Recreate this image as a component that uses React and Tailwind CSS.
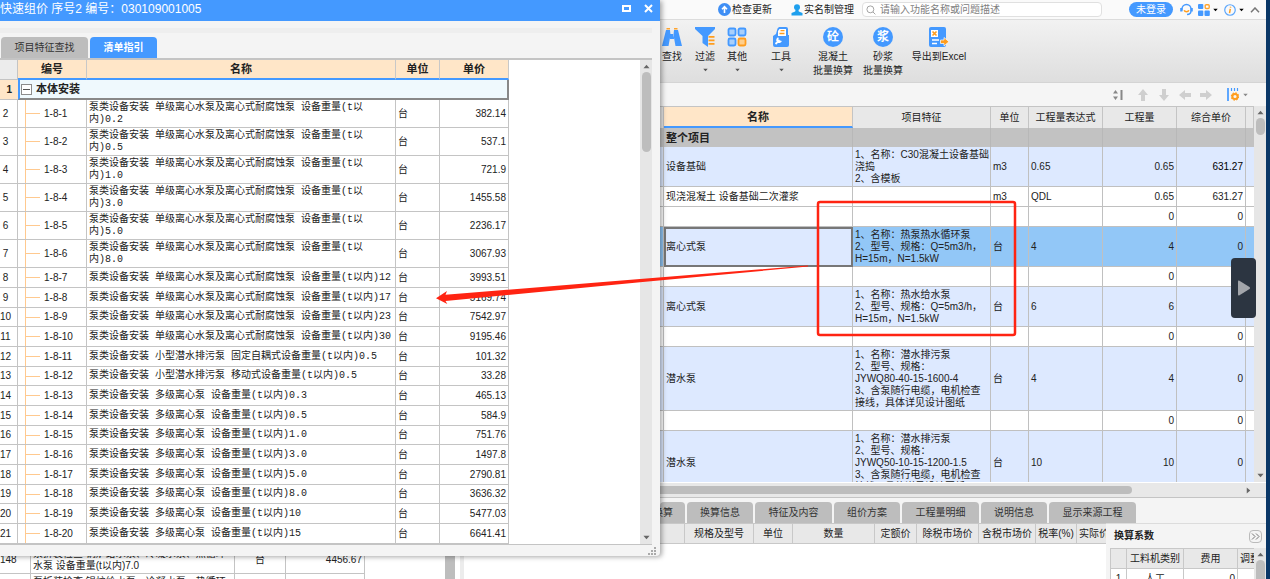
import React from 'react';

const pump = '泵类设备安装 单级离心水泵及离心式耐腐蚀泵 设备重量(t以';
const multi = '泵类设备安装 多级离心泵 设备重量(t以内)';

const guideRows = [
  { name: pump + '\n内)0.2', price: '382.14', tall: true },
  { name: pump + '\n内)0.5', price: '537.1', tall: true },
  { name: pump + '\n内)1.0', price: '721.9', tall: true },
  { name: pump + '\n内)3.0', price: '1455.58', tall: true },
  { name: pump + '\n内)5.0', price: '2236.17', tall: true },
  { name: pump + '\n内)8.0', price: '3067.93', tall: true },
  { name: pump + '内)12', price: '3993.51' },
  { name: pump + '内)17', price: '5169.74' },
  { name: pump + '内)23', price: '7542.97' },
  { name: pump + '内)30', price: '9195.46' },
  { name: '泵类设备安装 小型潜水排污泵 固定自耦式设备重量(t以内)0.5', price: '101.32' },
  { name: '泵类设备安装 小型潜水排污泵 移动式设备重量(t以内)0.5', price: '33.28' },
  { name: multi + '0.3', price: '465.13' },
  { name: multi + '0.5', price: '584.9' },
  { name: multi + '1.0', price: '751.76' },
  { name: multi + '3.0', price: '1497.8' },
  { name: multi + '5.0', price: '2790.81' },
  { name: multi + '8.0', price: '3636.32' },
  { name: multi + '10', price: '5477.03' },
  { name: multi + '15', price: '6641.41' },
];

const billRows = [
  { name: '设备基础', feature: '1、名称：C30混凝土设备基础\n浇捣\n2、含模板', unit: 'm3', expr: '0.65', qty: '0.65', price: '631.27', height: 'h-10', bg: 'bg-[#dde9ff]', bold: true },
  { name: '现浇混凝土 设备基础二次灌浆', unit: 'm3', expr: 'QDL', qty: '0.65', price: '631.27', height: 'h-5', bg: 'bg-white' },
  { qty: '0', price: '0', height: 'h-5', bg: 'bg-white' },
  { name: '离心式泵', feature: '1、名称：热泵热水循环泵\n2、型号、规格：Q=5m3/h，\nH=15m，N=1.5kW', unit: '台', expr: '4', qty: '4', price: '0', height: 'h-10', bg: 'bg-[#92c7f7]', selected: true },
  { qty: '0', price: '0', height: 'h-5', bg: 'bg-white' },
  { name: '离心式泵', feature: '1、名称：热水给水泵\n2、型号、规格：Q=5m3/h，\nH=15m，N=1.5kW', unit: '台', expr: '6', qty: '6', price: '0', height: 'h-10', bg: 'bg-[#dde9ff]' },
  { qty: '0', price: '0', height: 'h-5', bg: 'bg-white' },
  { name: '潜水泵', feature: '1、名称：潜水排污泵\n2、型号、规格：\nJYWQ80-40-15-1600-4\n3、含泵随行电缆，电机检查\n接线，具体详见设计图纸', unit: '台', expr: '4', qty: '4', price: '0', height: 'h-16', bg: 'bg-[#dde9ff]' },
  { qty: '0', price: '0', height: 'h-5', bg: 'bg-white' },
  { name: '潜水泵', feature: '1、名称：潜水排污泵\n2、型号、规格：\nJYWQ50-10-15-1200-1.5\n3、含泵随行电缆，电机检查\n接线，具体详见设计图纸', unit: '台', expr: '10', qty: '10', price: '0', height: 'h-16', bg: 'bg-[#dde9ff]' },
];

const Caret = ({ className = 'w-[7px] h-[5px] text-[#666]' }) => (
  <svg viewBox="0 0 8 5" className={`shrink-0 ${className}`} fill="currentColor">
    <path d="M0.5 0.5h7L4 4.5z" />
  </svg>
);

const VScroll = ({ thumb }) => (
  <div className="w-3 shrink-0 bg-[#e6e6e6] flex flex-col items-center py-1">
    <Caret className="w-[7px] h-[5px] text-[#666] rotate-180" />
    <div className={`w-[9px] mt-[3px] rounded-full bg-[#bdbdbd] ${thumb}`}></div>
    <div className="flex-1"></div>
    <Caret />
  </div>
);

const QuickPriceDialog = () => {
  const cell = 'border-b border-r border-[#c4c4c4] p-0';
  const head = 'h-5 border-b-2 border-r border-r-[#c8c8c8] border-b-[#4499ff] bg-[#ffe6c8] p-0 text-[11px] font-bold';
  return (
    <div className="relative z-10 bg-[#f4f4f4] rounded-br shadow-[2px_1px_5px_rgba(0,0,0,0.35)]">
      <div className="h-[21px] bg-[#4499ff] text-white flex items-center pr-[7px]">
        <h1 className="flex-1 pb-[3px] text-[12px] leading-4 whitespace-pre">快速组价 序号2 编号：030109001005</h1>
        <button aria-label="最大化" className="mr-[13px] mb-[5px] w-[9px] h-[7px] border-2 border-white"></button>
        <button aria-label="关闭" className="mb-[5px]">
          <svg viewBox="0 0 9 9" className="w-[9px] h-[9px]" stroke="white" strokeWidth="2"><path d="M1 1l7 7M8 1l-7 7" /></svg>
        </button>
      </div>
      <div className="mt-[7px] h-[5px] mr-2 bg-[#eeeeee]"></div>
      <div className="mt-1 ml-px flex gap-[2px]">
        <button className="w-[87px] h-[21px] rounded-t-sm bg-[#bdbdbd] text-[#333]">项目特征查找</button>
        <button className="w-[67px] h-[21px] rounded-t-sm bg-[#4499ff] text-white font-bold">清单指引</button>
      </div>
      <div className="mr-2 flex bg-white border-t-2 border-b border-[#c4c4c4]">
        <div className="flex-1">
          <table className="table-fixed w-[509px] border-separate border-spacing-0 leading-3">
            <colgroup>
              <col className="w-[18px]" />
              <col className="w-[69px]" />
              <col className="w-[309px]" />
              <col className="w-[44px]" />
              <col className="w-[69px]" />
            </colgroup>
            <thead>
              <tr>
                <th className="h-5 bg-[#ececec] border-b border-r border-[#c4c4c4] p-0"></th>
                <th className={head}>编号</th>
                <th className={head}>名称</th>
                <th className={head}>单位</th>
                <th className={head}>单价</th>
              </tr>
            </thead>
            <tbody>
              <tr>
                <td className="h-5 bg-[#ffe6c8] border-b border-[#c4c4c4] pr-[6px] text-right font-bold">1</td>
                <td colSpan={4} className="bg-[#eff9fd] border-l-2 border-l-[#4499ff] border-b-2 border-r-2 border-[#888] p-0">
                  <div className="flex items-center gap-1 pl-px text-[11px] font-bold">
                    <button aria-label="折叠" className="w-[11px] h-[11px] border border-[#8c8c8c] bg-white flex items-center justify-center">
                      <span className="w-[7px] h-px bg-[#555]"></span>
                    </button>
                    本体安装
                  </div>
                </td>
              </tr>
              {guideRows.map((row, i) => {
                const height = row.tall ? 'h-7' : i % 3 === 2 ? 'h-[19px]' : 'h-5';
                return (
                  <tr key={i}>
                    <td className={`${cell} ${height} text-center pr-[6px]`}>{i + 2}</td>
                    <td className={`${cell} ${height}`}>
                      <div className="ml-[7px] h-full border-l border-[#ffc98f] flex items-center">
                        <span className="w-[14px] h-px bg-[#ffc98f]"></span>
                        <span className="ml-1">1-8-{i + 1}</span>
                      </div>
                    </td>
                    <td className={`${cell} pl-[2px] whitespace-pre font-['Liberation_Mono','Noto_Sans_CJK_SC',monospace]`}>{row.name}</td>
                    <td className={`${cell} pl-[2px]`}>台</td>
                    <td className={`${cell} pr-[2px] text-right`}>{row.price}</td>
                  </tr>
                );
              })}
            </tbody>
          </table>
        </div>
        <VScroll thumb="h-20" />
      </div>
      <div className="h-[11px] flex justify-end items-center pr-1">
        <svg viewBox="0 0 8 8" className="w-2 h-2" fill="#aaa">
          <path d="M6 0h2v2H6zM3 3h2v2H3zM6 3h2v2H6zM0 6h2v2H0zM3 6h2v2H3zM6 6h2v2H6z" />
        </svg>
      </div>
    </div>
  );
};

// quota list that sits behind the dialog
const QuotaList = () => {
  const cell = 'h-7 border-b border-r border-[#c4c4c4] p-0';
  return (
    <div className="-mt-[10px] flex-1 min-h-0 overflow-hidden flex bg-white leading-3">
      <div className="flex-1">
        <table className="table-fixed w-[365px] border-separate border-spacing-0">
          <colgroup>
            <col className="w-[31px]" />
            <col className="w-[204px]" />
            <col className="w-[51px]" />
            <col className="w-[79px]" />
          </colgroup>
          <tbody>
            <tr>
              <td className={cell}>148</td>
              <td className={`${cell} pl-[2px] whitespace-pre`}>{'泵拆装检查 锅炉给水泵、冷凝水泵、热循环\n水泵 设备重量(t以内)7.0'}</td>
              <td className={`${cell} text-center`}>台</td>
              <td className={`${cell} pr-[2px] text-right`}>4456.67</td>
            </tr>
            <tr>
              <td className={cell}></td>
              <td className={`${cell} pl-[2px] whitespace-pre`}>{'泵拆装检查 锅炉给水泵、冷凝水泵、热循环\n水泵 设备重量(t以内)10'}</td>
              <td className={cell}></td>
              <td className={cell}></td>
            </tr>
          </tbody>
        </table>
      </div>
      <div className="w-[10px] bg-[#bdbdbd]"></div>
      <div className="w-[9px] mr-[196px] border-r-4 border-[#ececec]"></div>
    </div>
  );
};

const TitleBar = () => (
  <header className="h-5 shrink-0 flex items-center bg-[#fafafa] border-b border-[#dcdcdc] pr-[6px]">
    <button className="ml-[58px] flex items-center gap-px">
      <svg viewBox="0 0 13 13" className="w-[13px] h-[13px]">
        <circle cx="6.5" cy="6.5" r="6.5" fill="#3f8ff5" />
        <path d="M6.5 10V4M4 6.2l2.5-2.5L9 6.2" stroke="white" strokeWidth="1.6" fill="none" />
      </svg>
      检查更新
    </button>
    <button className="ml-[19px] flex items-center gap-px">
      <svg viewBox="0 0 12 12" className="w-3 h-3" fill="#1fa0ee">
        <circle cx="6" cy="3.2" r="3" />
        <path d="M4.5 6h3l.3 1.5L11.5 9v2.5H.5V9l3.7-1.5z" />
      </svg>
      实名制管理
    </button>
    <label className="ml-2 w-60 h-[15px] flex items-center gap-1 pl-[3px] bg-white border border-[#e0e0e0] rounded-sm">
      <svg viewBox="0 0 11 11" className="w-[10px] h-[10px] shrink-0" stroke="#999" fill="none">
        <circle cx="4.8" cy="4.8" r="3.8" />
        <path d="M7.7 7.7l2.6 2.6" />
      </svg>
      <input aria-label="搜索" placeholder="请输入功能名称或问题描述" className="flex-1 min-w-0 h-3 outline-none placeholder:text-[#808080]" />
    </label>
    <div className="flex-1"></div>
    <button className="w-[44px] h-[15px] rounded-full bg-[#4499ff] text-white">未登录</button>
    <button aria-label="客服" className="ml-[7px]">
      <svg viewBox="0 0 13 13" className="w-[13px] h-[13px]" fill="none">
        <path d="M2 7.5V6a4.5 4.5 0 0 1 9 0v1.500c0 2.500-1.800 4-4 4" stroke="#4499ff" strokeWidth="1.4" />
        <path d="M1.300 5v3.400M11.700 5v3.400" stroke="#4499ff" strokeWidth="2.2" />
        <path d="M4.200 7.200c.8 2 3.800 2 4.600 0" stroke="#ff9d1e" strokeWidth="1.6" />
      </svg>
    </button>
    <button aria-label="应用" className="ml-[5px] flex items-center gap-[3px]">
      <svg viewBox="0 0 12 12" className="w-3 h-3" fill="#4499ff">
        <rect width="5.3" height="5" rx="1" />
        <rect y="6.5" width="5.3" height="5.5" rx="1" />
        <rect x="6.5" y="6.5" width="5.3" height="5.5" rx="1" />
        <rect x="7.2" y=".7" width="4" height="3.8" rx="1" fill="#fff" stroke="#ffa42e" strokeWidth="1.4" />
      </svg>
      <Caret className="text-black w-[5px] h-[4px]" />
    </button>
    <button aria-label="关于" className="ml-[6px] flex items-center gap-[3px]">
      <svg viewBox="0 0 13 13" className="w-3 h-3" fill="none">
        <circle cx="6.5" cy="6.5" r="5.7" stroke="#5aa5fb" strokeWidth="1.3" />
        <path d="M7.200 3l-.2 1M6.800 5.300L6 10" stroke="#ff9d1e" strokeWidth="1.6" />
      </svg>
      <Caret className="text-black w-[5px] h-[4px]" />
    </button>
    <button aria-label="收起" className="ml-[6px]">
      <svg viewBox="0 0 10 6" className="w-[10px] h-[6px]" stroke="#777" strokeWidth="1.5" fill="none"><path d="M1 5.300L5 1l4 4.300" /></svg>
    </button>
  </header>
);

const RoundIcon = ({ char }) => (
  <span className="w-5 h-5 rounded-full bg-[#4499ff] text-white text-[12px] leading-5 text-center font-bold">{char}</span>
);

const Tool = ({ icon, label, sub, drop, className }) => (
  <button className={`flex flex-col items-center whitespace-nowrap ${className}`}>
    <span className="h-5 flex items-center">{icon}</span>
    <span className="mt-[3px] leading-[14px]">{label}</span>
    {sub && <span className="leading-[14px]">{sub}</span>}
    {drop && <Caret className="mt-1 w-[5px] h-[4px] text-[#555]" />}
  </button>
);

const Toolbar = () => (
  <div className="h-[63px] shrink-0 flex items-start pt-[7px] bg-gradient-to-b from-[#f2f2f2] to-[#dedede] border-b border-[#d4d4d4]">
    <Tool className="w-6" label="查找" icon={
      <svg viewBox="0 0 20 20" className="w-5 h-5" fill="#4499ff">
        <path d="M4 3h4l.5 5L6.500 19H0zM16 3h-4l-.5 5 2 11H20zM8 7h4v5H8z" />
        <path d="M4.500 1h3.500v1.500H4.500zM12 1h3.500v1.500H12z" fill="#ffa42e" />
      </svg>
    } />
    <Tool className="ml-[5px] w-8" label="过滤" drop icon={
      <svg viewBox="0 0 20 20" className="w-5 h-5" fill="#4499ff">
        <path d="M0 0h20v2l-7 7v11l-5.500-4V9L0 2z" />
        <path d="M13.500 9h6v1.700h-6zM13.500 12.500h6v1.700h-6zM13.500 16h6v1.700h-6z" fill="#ff9d1e" />
      </svg>
    } />
    <Tool className="w-8" label="其他" drop icon={
      <svg viewBox="0 0 20 20" className="w-5 h-5" fill="#a8cffb" stroke="#4499ff" strokeWidth="1.800">
        <rect x="1.500" y="1.500" width="7" height="7" rx="1.500" />
        <rect x="11.500" y="1.500" width="7" height="7" rx="1.500" />
        <rect x="1.500" y="11.500" width="7" height="7" rx="1.500" />
        <rect x="11.500" y="11.500" width="7" height="7" rx="1.500" fill="#ffcf8d" stroke="#ff9d1e" />
      </svg>
    } />
    <Tool className="ml-3 w-8" label="工具" drop icon={
      <svg viewBox="0 0 20 20" className="w-5 h-5">
        <path d="M6.500 1.500L8 0h7a2 2 0 0 1 2 2v6h1v10a2 2 0 0 1-2 2H4a2 2 0 0 1-2-2V9l3-2z" fill="#4499ff" />
        <path d="M8.500 2H15v7H7V4z" fill="#fff" />
        <path d="M9.500 3.700h4M8.500 6.500h5" stroke="#ff9d1e" strokeWidth="1.300" />
        <path d="M4.500 17l4-4M7.500 11.200a2 2 0 1 0 2.500 2.500" stroke="#fff" strokeWidth="1.800" fill="none" />
      </svg>
    } />
    <Tool className="ml-4 w-10" label="混凝土" sub="批量换算" icon={<RoundIcon char="砼" />} />
    <Tool className="ml-[10px] w-10" label="砂浆" sub="批量换算" icon={<RoundIcon char="浆" />} />
    <Tool className="ml-2 w-14" label="导出到Excel" icon={
      <svg viewBox="0 0 20 20" className="w-5 h-5">
        <rect x="0" y="0" width="17" height="20" rx="2" fill="#4499ff" />
        <path d="M2 3h7v7H2z" fill="#fff" />
        <path d="M3.500 4.500l4 4M7.500 4.500l-4 4" stroke="#ff9d1e" strokeWidth="1.700" />
        <path d="M3 13h7M3 16.500h5" stroke="#fff" strokeWidth="1.300" />
        <path d="M11.500 13h3.500v-2.500l5 4.200-5 4.200v-2.400h-3.500z" fill="#ff9d1e" stroke="#fff" strokeWidth=".7" />
      </svg>
    } />
  </div>
);

const Arrow = ({ label, turn }) => (
  <button aria-label={label} className="w-[13px] flex justify-center">
    <svg viewBox="0 0 12 12" className={`w-3 h-3 ${turn}`} fill="#cfcfcf"><path d="M6 0l5 6H8v6H4V6H1z" /></svg>
  </button>
);

const SubBar = () => (
  <div className="h-[23px] shrink-0 flex items-center justify-end pr-[18px] bg-[#f5f5f5]">
    <button aria-label="行高">
      <svg viewBox="0 0 11 12" className="w-[11px] h-3" fill="#888"><path d="M0 4.500L2.500 1 5 4.500zM0 7.500L2.500 11 5 7.500zM7.500 1h2v10h-2z" /></svg>
    </button>
    <div className="ml-3 mr-[15px] flex gap-2">
      <Arrow label="上移" turn="rotate-0" />
      <Arrow label="下移" turn="rotate-180" />
      <Arrow label="左移" turn="-rotate-90" />
      <Arrow label="右移" turn="rotate-90" />
    </div>
    <button aria-label="列设置" className="flex items-center gap-1">
      <svg viewBox="0 0 12 13" className="w-3 h-[13px]">
        <path d="M1 0v13" stroke="#4499ff" strokeWidth="1.700" />
        <path d="M4.500 0v3M7.500 0v3M10.500 0v3" stroke="#4499ff" strokeWidth="1.200" />
        <circle cx="8" cy="8.500" r="2.600" fill="none" stroke="#ff9d1e" strokeWidth="2" />
        <circle cx="8" cy="8.500" r="3.600" fill="none" stroke="#ff9d1e" strokeWidth="1.200" strokeDasharray="1.600 1.200" />
      </svg>
      <Caret className="w-[5px] h-[4px] text-[#888]" />
    </button>
  </div>
);

const BillTable = () => {
  const cell = 'border-b border-r border-[#c0c0c0] p-0';
  const head = 'h-[22px] bg-[#e8e8e8] border-r border-t border-[#c4c4c4] p-0 font-normal';
  return (
    <div className="flex-1 min-h-0 flex flex-col">
      <div className="flex-1 min-h-0 flex">
        <div className="flex-1 min-w-0 overflow-hidden">
          <table className="table-fixed w-full border-separate border-spacing-0 leading-3">
            <colgroup>
              <col className="w-1" />
              <col />
              <col className="w-[138px]" />
              <col className="w-[38px]" />
              <col className="w-[74px]" />
              <col className="w-[74px]" />
              <col className="w-[69px]" />
              <col className="w-2" />
            </colgroup>
            <thead>
              <tr>
                <th className={head}></th>
                <th className="bg-[#ffe6c8] border-b-2 border-b-[#4499ff] border-t border-r border-[#c4c4c4] p-0 text-[11px] font-bold">名称</th>
                <th className={head}>项目特征</th>
                <th className={head}>单位</th>
                <th className={head}>工程量表达式</th>
                <th className={head}>工程量</th>
                <th className={head}>综合单价</th>
                <th className={head}></th>
              </tr>
            </thead>
            <tbody>
              <tr className="bg-[#c2c2c2]">
                <td className="h-[19px] border-r border-[#b8b8b8] p-0"></td>
                <td className="border-r border-[#b8b8b8] p-0 pl-[2px] text-[11px] font-bold">整个项目</td>
                <td className="border-r border-[#b8b8b8]"></td>
                <td className="border-r border-[#b8b8b8]"></td>
                <td className="border-r border-[#b8b8b8]"></td>
                <td className="border-r border-[#b8b8b8]"></td>
                <td className="border-r border-[#b8b8b8]"></td>
                <td></td>
              </tr>
              {billRows.map((row, i) => (
                <tr key={i} className={row.bg}>
                  <td className={`${cell} ${row.height}`}></td>
                  <td className={row.selected ? 'bg-[#dde9ff] border-2 border-[#777] p-0' : `${cell} pl-[2px]`}>{row.name}</td>
                  <td className={`${cell} pl-[2px] whitespace-pre`}>{row.feature}</td>
                  <td className={`${cell} pl-[2px]`}>{row.unit}</td>
                  <td className={`${cell} pl-[2px]`}>{row.expr}</td>
                  <td className={`${cell} pr-[2px] text-right`}>{row.qty}</td>
                  <td className={`${cell} pr-[2px] text-right ${row.bold ? 'text-black' : ''}`}>{row.price}</td>
                  <td className="border-b border-[#c0c0c0] p-0"></td>
                </tr>
              ))}
            </tbody>
          </table>
        </div>
        <VScroll thumb="h-[17px]" />
      </div>
      <div className="h-[14px] mt-px shrink-0 flex items-center bg-[#e8e8e8]">
        <div className="w-[472px] h-2 rounded-r-full bg-[#bdbdbd]"></div>
        <div className="flex-1"></div>
        <Caret className="mr-[14px] w-[7px] h-[5px] text-[#666] -rotate-90" />
      </div>
    </div>
  );
};

const BottomPanel = () => {
  const tab = 'h-[21px] rounded-t-sm bg-[#bdbdbd] text-[#333]';
  const th = 'h-[21px] bg-[#e8e8e8] border-r border-y border-[#c8c8c8] p-0 font-normal whitespace-nowrap';
  return (
    <div className="h-[82px] shrink-0 border-t border-[#c4c4c4] bg-[#f4f4f4] flex flex-col">
      <div className="mt-1 flex gap-[2px] overflow-hidden">
        <button className={`${tab} w-[25px] flex justify-end items-center pr-3 whitespace-nowrap`}>换算</button>
        <button className={`${tab} w-[66px]`}>换算信息</button>
        <button className={`${tab} w-[77px]`}>特征及内容</button>
        <button className={`${tab} w-[66px]`}>组价方案</button>
        <button className={`${tab} w-[77px]`}>工程量明细</button>
        <button className={`${tab} w-[66px]`}>说明信息</button>
        <button className={`${tab} w-[87px]`}>显示来源工程</button>
      </div>
      <div className="flex-1 min-h-0 flex">
        <div className="flex-1 min-w-0 bg-white overflow-hidden">
          <table className="table-fixed w-[460px] border-separate border-spacing-0 leading-3">
            <colgroup>
              <col className="w-[25px]" />
              <col className="w-[69px]" />
              <col className="w-[39px]" />
              <col className="w-[82px]" />
              <col className="w-[42px]" />
              <col className="w-[62px]" />
              <col className="w-[57px]" />
              <col className="w-[41px]" />
              <col className="w-[43px]" />
            </colgroup>
            <thead>
              <tr>
                <th className={th}></th>
                <th className={th}>规格及型号</th>
                <th className={th}>单位</th>
                <th className={th}>数量</th>
                <th className={th}>定额价</th>
                <th className={th}>除税市场价</th>
                <th className={th}>含税市场价</th>
                <th className={th}>税率(%)</th>
                <th className={`${th} text-left pl-[2px]`}>实际价</th>
              </tr>
            </thead>
          </table>
        </div>
        <div className="w-40 pl-1 overflow-hidden border-t border-[#dcdcdc] flex flex-col">
          <div className="h-[24px] shrink-0 flex items-center pl-1 pr-1">
            <h2 className="flex-1 font-bold">换算系数</h2>
            <button aria-label="展开" className="w-[13px] h-[13px] rounded-sm border border-[#bbb] flex items-center justify-center">
              <svg viewBox="0 0 9 7" className="w-[9px] h-[7px]" stroke="#777" fill="none"><path d="M1 .5l3 3-3 3M5 .5l3 3-3 3" /></svg>
            </button>
          </div>
          <div className="flex-1 min-h-0 flex">
            <div className="flex-1 overflow-hidden">
              <table className="table-fixed w-[162px] border-separate border-spacing-0 bg-white leading-3">
                <colgroup>
                  <col className="w-[17px]" />
                  <col className="w-[57px]" />
                  <col className="w-[54px]" />
                  <col className="w-[34px]" />
                </colgroup>
                <thead>
                  <tr>
                    <th className={`${th} border-l`}></th>
                    <th className={th}>工料机类别</th>
                    <th className={th}>费用</th>
                    <th className={`${th} text-left pl-[2px]`}>调整</th>
                  </tr>
                </thead>
                <tbody>
                  <tr>
                    <td className="h-5 border-x border-[#c8c8c8] p-0 text-center">1</td>
                    <td className="border-r border-[#c8c8c8] p-0 text-center">人工</td>
                    <td className="border-r border-[#c8c8c8] p-0 pr-[2px] text-right">0</td>
                    <td></td>
                  </tr>
                </tbody>
              </table>
            </div>
            <div className="w-3 bg-[#e6e6e6] flex flex-col items-center pt-1 overflow-hidden">
              <Caret className="w-[7px] h-[5px] text-[#666] rotate-180" />
              <div className="w-[9px] h-10 mt-[3px] shrink-0 rounded-t-full bg-[#bdbdbd]"></div>
            </div>
          </div>
        </div>
      </div>
    </div>
  );
};

// red box and arrow drawn on top of both windows
const Annotation = () => (
  <svg className="absolute inset-0 z-20 w-full h-full pointer-events-none">
    <rect x="818" y="202" width="197" height="133" rx="2" fill="none" stroke="#ff2412" strokeWidth="2.500" />
    <path d="M436 298.300L447 291l-1.500 3.700L640 279l168-13.500v1L640 282.300 445.500 301l1.800 3z" fill="#ff2412" />
  </svg>
);

const App = () => {
  return (
    <div className="relative h-screen overflow-hidden flex bg-white text-[10px] leading-3 text-[#222] font-['Liberation_Sans','Noto_Sans_CJK_SC',sans-serif]">
      <aside className="w-[660px] shrink-0 flex flex-col">
        <QuickPriceDialog />
        <QuotaList />
      </aside>
      <main className="flex-1 min-w-0 flex flex-col">
        <TitleBar />
        <Toolbar />
        <SubBar />
        <BillTable />
        <BottomPanel />
      </main>
      <div className="w-1 shrink-0 bg-[#0a3767]"></div>
      <Annotation />
      <button aria-label="播放" className="absolute z-20 right-[14px] top-[258px] w-[25px] h-[60px] rounded bg-[#2c3541] flex items-center justify-center">
        <svg viewBox="0 0 12 16" className="w-3 h-4" fill="#a3a6ab"><path d="M1 0.500Q0 0 0 1.500v13Q0 16 1.500 15.300L11.500 9q1-1 0-2z" /></svg>
      </button>
    </div>
  );
};

export default App;
